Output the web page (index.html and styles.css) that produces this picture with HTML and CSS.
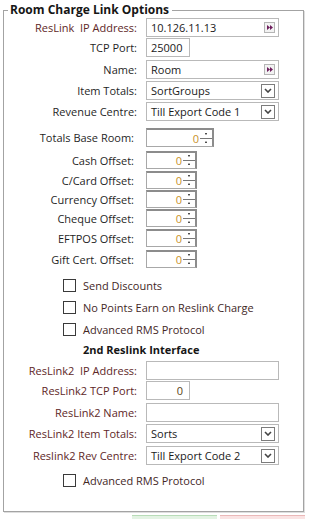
FILE: index.html
```html
<!DOCTYPE html>
<html lang="en">
<head>
    <meta charset="UTF-8">
    <meta name="viewport" content="width=device-width, initial-scale=1.0">
    <title>Room Charge Link Options</title>
    <link rel="stylesheet" href="styles.css">
</head>
<body>
    <fieldset class="group">
        <legend>Room Charge Link Options</legend>

        <div class="row r-ip">
            <label class="res">ResLink&nbsp; IP Address:</label>
            <div class="box wide">
                <span class="val">10.126.11.13</span>
                <span class="go"><svg width="6" height="5" viewBox="0 0 6 5"><path d="M0 0 L3 2.5 L0 5 Z M3 0 L6 2.5 L3 5 Z" fill="#6e1d5c"/></svg></span>
            </div>
        </div>
        <div class="row r-port">
            <label>TCP Port:</label>
            <div class="box short"><span class="val">25000</span></div>
        </div>
        <div class="row r-name">
            <label>Name:</label>
            <div class="box wide">
                <span class="val">Room</span>
                <span class="go"><svg width="6" height="5" viewBox="0 0 6 5"><path d="M0 0 L3 2.5 L0 5 Z M3 0 L6 2.5 L3 5 Z" fill="#6e1d5c"/></svg></span>
            </div>
        </div>
        <div class="row r-combo">
            <label>Item Totals:</label>
            <div class="box wide combo">
                <span class="val">SortGroups</span>
                <span class="drop"><svg width="8" height="5" viewBox="0 0 8 5"><path d="M1 1 L4 4 L7 1" fill="none" stroke="#444" stroke-width="1.6"/></svg></span>
            </div>
        </div>
        <div class="row r-combo">
            <label>Revenue Centre:</label>
            <div class="box wide combo">
                <span class="val">Till Export Code 1</span>
                <span class="drop"><svg width="8" height="5" viewBox="0 0 8 5"><path d="M1 1 L4 4 L7 1" fill="none" stroke="#444" stroke-width="1.6"/></svg></span>
            </div>
        </div>

        <div class="row r-base">
            <label>Totals Base Room:</label>
            <div class="spin big">
                <span class="num">0</span>
                <span class="arrows"><svg width="12" height="15" viewBox="0 0 12 15"><path d="M0 7.5 H12" stroke="#777" stroke-width="1"/><path d="M5 3 L6 2 L7 3 Z M5 11 L6 12 L7 11 Z" fill="#444" stroke="#444" stroke-width="0.8"/></svg></span>
            </div>
        </div>
        <div class="row offset">
            <label>Cash Offset:</label>
            <div class="spin">
                <span class="num">0</span>
                <span class="arrows"><svg width="12" height="15" viewBox="0 0 12 15"><path d="M0 7.5 H12" stroke="#777" stroke-width="1"/><path d="M5 3 L6 2 L7 3 Z M5 11 L6 12 L7 11 Z" fill="#444" stroke="#444" stroke-width="0.8"/></svg></span>
            </div>
        </div>
        <div class="row offset">
            <label>C/Card Offset:</label>
            <div class="spin">
                <span class="num">0</span>
                <span class="arrows"><svg width="12" height="15" viewBox="0 0 12 15"><path d="M0 7.5 H12" stroke="#777" stroke-width="1"/><path d="M5 3 L6 2 L7 3 Z M5 11 L6 12 L7 11 Z" fill="#444" stroke="#444" stroke-width="0.8"/></svg></span>
            </div>
        </div>
        <div class="row offset tight">
            <label>Currency Offset:</label>
            <div class="spin">
                <span class="num">0</span>
                <span class="arrows"><svg width="12" height="15" viewBox="0 0 12 15"><path d="M0 7.5 H12" stroke="#777" stroke-width="1"/><path d="M5 3 L6 2 L7 3 Z M5 11 L6 12 L7 11 Z" fill="#444" stroke="#444" stroke-width="0.8"/></svg></span>
            </div>
        </div>
        <div class="row offset tight">
            <label>Cheque Offset:</label>
            <div class="spin">
                <span class="num">0</span>
                <span class="arrows"><svg width="12" height="15" viewBox="0 0 12 15"><path d="M0 7.5 H12" stroke="#777" stroke-width="1"/><path d="M5 3 L6 2 L7 3 Z M5 11 L6 12 L7 11 Z" fill="#444" stroke="#444" stroke-width="0.8"/></svg></span>
            </div>
        </div>
        <div class="row offset">
            <label>EFTPOS Offset:</label>
            <div class="spin">
                <span class="num">0</span>
                <span class="arrows"><svg width="12" height="15" viewBox="0 0 12 15"><path d="M0 7.5 H12" stroke="#777" stroke-width="1"/><path d="M5 3 L6 2 L7 3 Z M5 11 L6 12 L7 11 Z" fill="#444" stroke="#444" stroke-width="0.8"/></svg></span>
            </div>
        </div>
        <div class="row offset loose">
            <label>Gift Cert. Offset:</label>
            <div class="spin">
                <span class="num">0</span>
                <span class="arrows"><svg width="12" height="15" viewBox="0 0 12 15"><path d="M0 7.5 H12" stroke="#777" stroke-width="1"/><path d="M5 3 L6 2 L7 3 Z M5 11 L6 12 L7 11 Z" fill="#444" stroke="#444" stroke-width="0.8"/></svg></span>
            </div>
        </div>

        <div class="check first"><span class="tick"></span>Send Discounts</div>
        <div class="check"><span class="tick"></span>No Points Earn on Reslink Charge</div>
        <div class="check"><span class="tick"></span>Advanced RMS Protocol</div>

        <div class="heading">2nd Reslink Interface</div>

        <div class="row r2 r2-first">
            <label class="res">ResLink2&nbsp; IP Address:</label>
            <div class="box wide"></div>
        </div>
        <div class="row r2">
            <label class="res">ResLink2 TCP Port:</label>
            <div class="box short right"><span class="val port">0</span></div>
        </div>
        <div class="row r2 gap3">
            <label class="res">ResLink2 Name:</label>
            <div class="box wide"></div>
        </div>
        <div class="row r2 gap2">
            <label class="res">ResLink2 Item Totals:</label>
            <div class="box wide combo">
                <span class="val">Sorts</span>
                <span class="drop"><svg width="8" height="5" viewBox="0 0 8 5"><path d="M1 1 L4 4 L7 1" fill="none" stroke="#444" stroke-width="1.6"/></svg></span>
            </div>
        </div>
        <div class="row r2 gap3">
            <label class="res">Reslink2 Rev Centre:</label>
            <div class="box wide combo">
                <span class="val">Till Export Code 2</span>
                <span class="drop"><svg width="8" height="5" viewBox="0 0 8 5"><path d="M1 1 L4 4 L7 1" fill="none" stroke="#444" stroke-width="1.6"/></svg></span>
            </div>
        </div>

        <div class="check last"><span class="tick"></span>Advanced RMS Protocol</div>
    </fieldset>

    <div class="actions">
        <span class="btn ok"></span>
        <span class="btn cancel"></span>
    </div>
</body>
</html>
```

FILE: styles.css
```css
body {
    margin: 0;
    background-color: #fff;
    font-family: "Open Sans", "Noto Sans", sans-serif;
    font-size: 11px;
    color: #1f1f1f;
    overflow: hidden;
    height: 519px;
}
.group {
    box-sizing: border-box;
    width: 301px;
    margin: 2px 0 0 3px;
    padding: 0 0 20px 0;
    border: 1px solid #a3a3a3;
    box-shadow: 1px 1px 0 #dedede;
    min-width: 0;
}
legend {
    font-weight: bold;
    font-size: 12px;
    line-height: 16px;
    color: #161616;
    padding: 0 3px 0 2px;
    margin-left: 4px;
}
.row {
    display: flex;
    align-items: center;
    height: 19px;
}
.row label {
    width: 133px;
    margin-right: 9px;
    text-align: right;
    white-space: nowrap;
}
.row label.res {
    color: #5e2727;
}
.r-port { margin-top: 1px; }
.r-name { margin-top: 3px; }
.r-combo { margin-top: 2px; }
.r-base { margin-top: 7px; }
.offset {
    margin-top: 2px;
    height: 18px;
}
.offset.tight { margin-top: 1px; }
.offset.loose { margin-top: 3px; }
.r-base + .offset { margin-top: 4px; }
.offset label {
    width: 130px;
    margin-right: 12px;
}
.r-base label {
    width: 130px;
    margin-right: 12px;
}
.box {
    box-sizing: border-box;
    height: 100%;
    border: 1px solid #b9b9b9;
    background-color: #fff;
    display: flex;
    align-items: center;
    padding: 0 2px 0 4px;
}
.box.wide { width: 133px; }
.box.short { width: 44px; }
.box.right { justify-content: flex-end; padding-right: 6px; }
.val {
    flex: 1;
    white-space: nowrap;
    color: #1a1a1a;
}
.val.port {
    flex: none;
    color: #5a4418;
}
.go {
    box-sizing: border-box;
    width: 11px;
    height: 11px;
    margin-right: 1px;
    border: 1px solid #b5b5b5;
    background-color: #f2f2f2;
    display: flex;
    align-items: center;
    justify-content: center;
}
.drop {
    box-sizing: border-box;
    width: 14px;
    height: 14px;
    margin-right: 1px;
    border: 1px solid #7c7c7c;
    background-color: #fff;
    display: flex;
    align-items: center;
    justify-content: center;
}
.spin {
    box-sizing: border-box;
    width: 51px;
    height: 100%;
    border: 1px solid #a8a8a8;
    border-top: 2px solid #8c8c8c;
    border-right: 2px solid #8c8c8c;
    display: flex;
    align-items: center;
    justify-content: flex-end;
}
.spin.big { width: 68px; }
.num {
    color: #c8912a;
    margin-right: 1px;
}
.arrows {
    display: flex;
    align-items: center;
}
.check {
    display: flex;
    align-items: center;
    height: 22px;
    padding-left: 59px;
    color: #43281f;
}
.check.first { margin-top: 6px; }
.check.last { margin-top: 4px; }
.tick {
    box-sizing: border-box;
    width: 13px;
    height: 13px;
    border: 1px solid #3a3a3a;
    background-color: #fff;
    margin-right: 7px;
}
.heading {
    height: 20px;
    line-height: 20px;
    padding-left: 79px;
    font-weight: bold;
    color: #161616;
}
.r2 { margin-top: 1px; }
.r2.gap2 { margin-top: 2px; }
.r2.gap3 { margin-top: 3px; }
.actions {
    display: flex;
    justify-content: flex-end;
    gap: 3px;
    margin: 3px 4px 0 0;
}
.btn {
    width: 85px;
    height: 20px;
}
.ok {
    background-color: #e3f3e3;
    border-top: 1px solid #b8dcb8;
}
.cancel {
    background-color: #fae3e3;
    border-top: 1px solid #eab8b8;
}
```
